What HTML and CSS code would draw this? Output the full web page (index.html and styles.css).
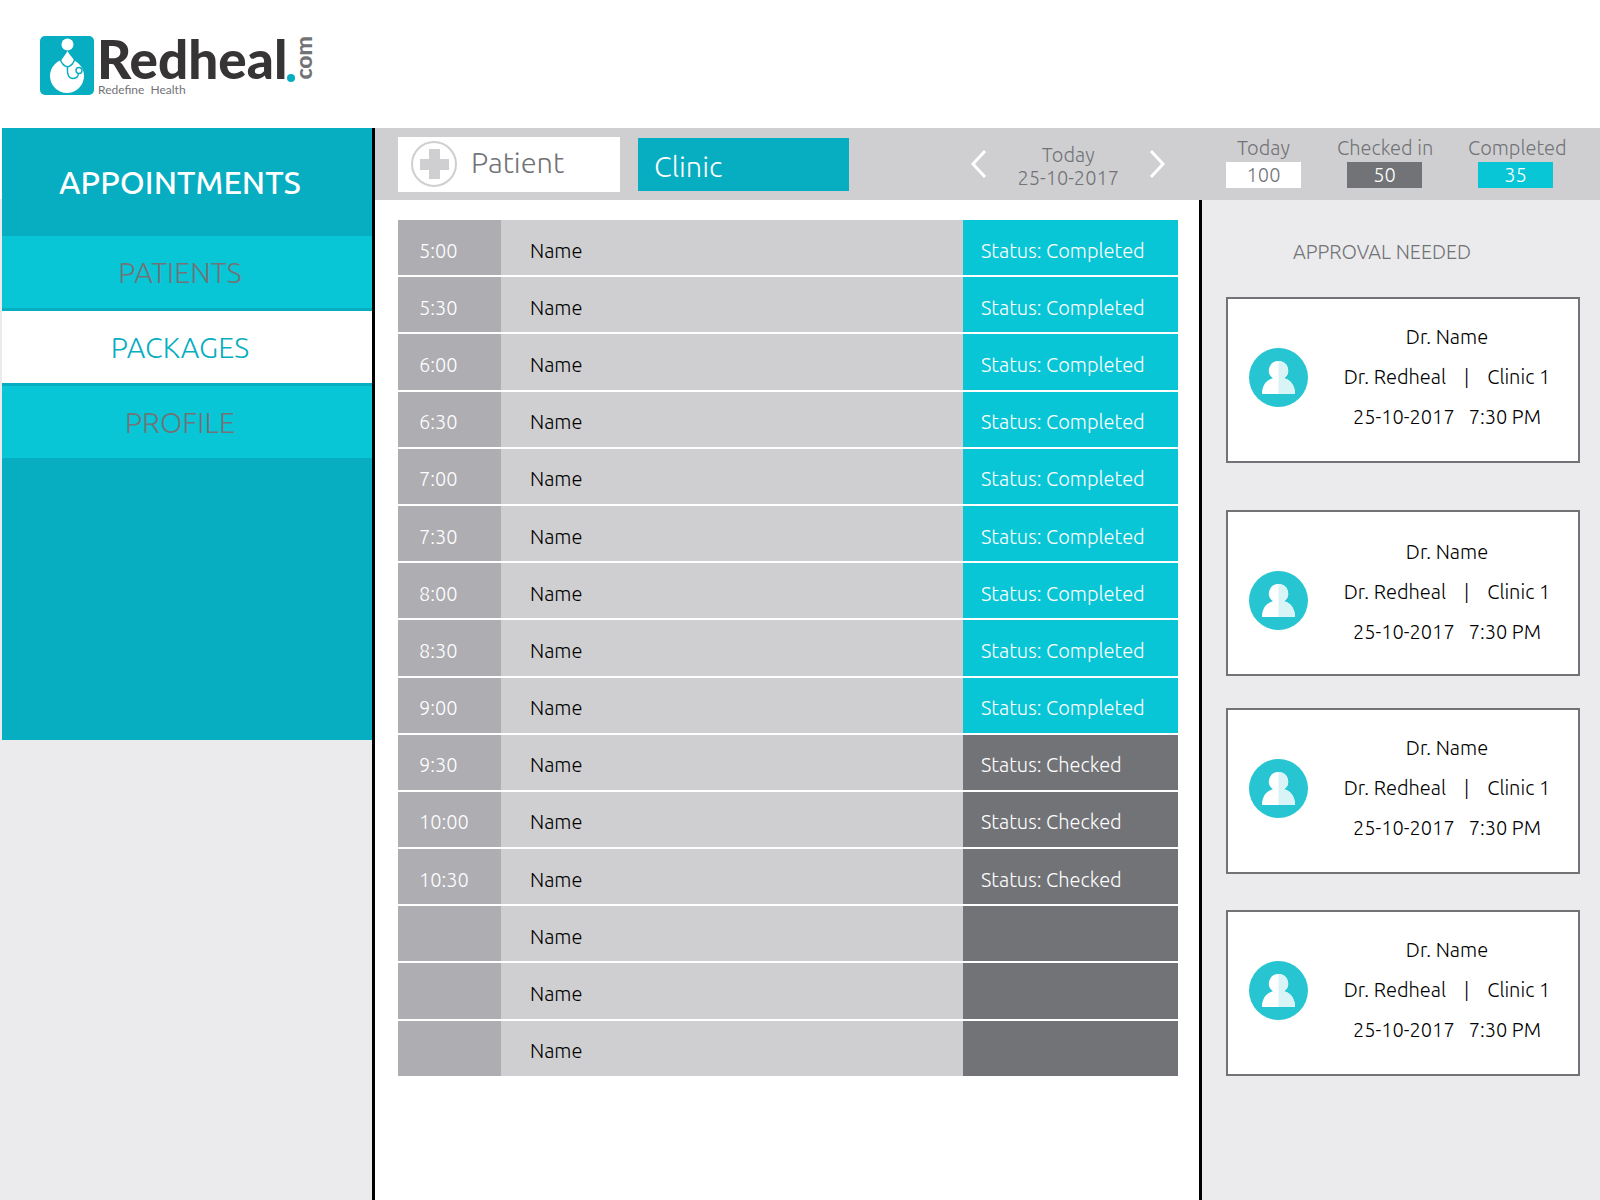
FILE: index.html
```html
<!DOCTYPE html>
<html lang="en">
<head>
<meta charset="utf-8">
<title>Redheal.com – Appointments</title>
<meta name="viewport" content="width=device-width, initial-scale=1">
<link rel="stylesheet" href="styles.css">
</head>
<body>
<svg class="sprite" width="0" height="0" aria-hidden="true">
  <symbol id="avatar" viewBox="0 0 59 59">
    <circle cx="29.5" cy="29.5" r="29.5" fill="#27c5d1"/>
    <path d="M29.500 13a9.500 9.500 0 0 0-5.500 17.300C17 32 13 38 13 46h33c0-8-4-14-11-15.700A9.500 9.500 0 0 0 29.500 13z" fill="#fff"/>
    <path d="M29.500 13a9.500 9.500 0 0 1 5.500 17.300C42 32 46 38 46 46H29.500z" fill="#d9f4f6"/>
  </symbol>
</svg>

<header class="site-header">
  <a class="logo" href="#" aria-label="Redheal.com">
    <svg class="logo-mark" viewBox="0 0 54 59" aria-hidden="true">
      <rect width="54" height="59" rx="5" fill="#07adc0"/>
      <circle cx="27" cy="40" r="17" fill="#fff"/>
      <circle cx="27.500" cy="8.500" r="6" fill="#fff"/>
      <path d="M27.500 15C25 19.500 23 21.500 21 24.500c1.500 4 4 5.500 6.500 6 3-.5 5.500-2 7-6-2-3-4.500-5-7-9.500z" fill="#fff"/>
      <path d="M20.500 23.500c1 4.500 4 6.500 7 7.500 3-1 6-3 7-7.500M27.500 31c-.5 7.500 1 11.500 5.500 11.500 4 0 6-2.500 5-6" fill="none" stroke="#07adc0" stroke-width="1.400"/>
      <circle cx="39" cy="34.500" r="3" fill="#fff" stroke="#07adc0" stroke-width="1.400"/>
    </svg>
    <span class="logo-words">
      <span class="logo-name">Redheal</span>
      <span class="logo-tag">Redefine&nbsp; Health</span>
    </span>
    <span class="logo-dot"></span>
    <span class="logo-com">com</span>
  </a>
</header>

<div class="layout">
  <aside class="sidebar">
    <nav class="menu">
      <h1 class="menu-title">APPOINTMENTS</h1>
      <a class="menu-item" href="#">PATIENTS</a>
      <a class="menu-item is-active" href="#">PACKAGES</a>
      <a class="menu-item" href="#">PROFILE</a>
    </nav>
  </aside>

  <div class="content">
    <div class="toolbar">
      <div class="toolbar-main">
        <button class="btn btn-patient" type="button">
          <svg class="plus" viewBox="0 0 46 46" aria-hidden="true">
            <circle cx="23" cy="23" r="22" fill="none" stroke="#cfcfd1" stroke-width="2"/>
            <path d="M18 8h11v10h9v11h-9v9H18v-9H9V18h9z" fill="#cfcfd1"/>
          </svg>
          <span class="btn-label">Patient</span>
        </button>
        <button class="btn btn-clinic" type="button">Clinic</button>
        <div class="date-nav">
          <button class="arrow" type="button" aria-label="Previous day">
            <svg viewBox="0 0 16 28" aria-hidden="true"><path d="M14 1L2 14l12 13" fill="none" stroke="#fff" stroke-width="3"/></svg>
          </button>
          <div class="date">Today<br>25-10-2017</div>
          <button class="arrow" type="button" aria-label="Next day">
            <svg viewBox="0 0 16 28" aria-hidden="true"><path d="M2 1l12 13L2 27" fill="none" stroke="#fff" stroke-width="3"/></svg>
          </button>
        </div>
      </div>
      <dl class="stats">
        <div class="stat stat-today"><dt>Today</dt><dd>100</dd></div>
        <div class="stat stat-checked"><dt>Checked in</dt><dd>50</dd></div>
        <div class="stat stat-completed"><dt>Completed</dt><dd>35</dd></div>
      </dl>
    </div>

    <div class="columns">
      <main class="schedule">
        <table class="slots">
          <tbody>
            <tr><td class="time">5:00</td><td class="name">Name</td><td class="status completed">Status: Completed</td></tr>
            <tr><td class="time">5:30</td><td class="name">Name</td><td class="status completed">Status: Completed</td></tr>
            <tr><td class="time">6:00</td><td class="name">Name</td><td class="status completed">Status: Completed</td></tr>
            <tr><td class="time">6:30</td><td class="name">Name</td><td class="status completed">Status: Completed</td></tr>
            <tr><td class="time">7:00</td><td class="name">Name</td><td class="status completed">Status: Completed</td></tr>
            <tr><td class="time">7:30</td><td class="name">Name</td><td class="status completed">Status: Completed</td></tr>
            <tr><td class="time">8:00</td><td class="name">Name</td><td class="status completed">Status: Completed</td></tr>
            <tr><td class="time">8:30</td><td class="name">Name</td><td class="status completed">Status: Completed</td></tr>
            <tr><td class="time">9:00</td><td class="name">Name</td><td class="status completed">Status: Completed</td></tr>
            <tr><td class="time">9:30</td><td class="name">Name</td><td class="status checked">Status: Checked</td></tr>
            <tr><td class="time">10:00</td><td class="name">Name</td><td class="status checked">Status: Checked</td></tr>
            <tr><td class="time">10:30</td><td class="name">Name</td><td class="status checked">Status: Checked</td></tr>
            <tr><td class="time"></td><td class="name">Name</td><td class="status checked"></td></tr>
            <tr><td class="time"></td><td class="name">Name</td><td class="status checked"></td></tr>
            <tr><td class="time"></td><td class="name">Name</td><td class="status checked"></td></tr>
          </tbody>
        </table>
      </main>

      <aside class="approvals">
        <h2 class="approvals-title">APPROVAL NEEDED</h2>
        <article class="card card-first">
          <svg class="avatar" aria-hidden="true"><use href="#avatar"/></svg>
          <div class="card-text">
            <p>Dr. Name</p>
            <p class="place"><span>Dr. Redheal</span><span>|</span><span>Clinic 1</span></p>
            <p class="when"><span>25-10-2017</span><span>7:30 PM</span></p>
          </div>
        </article>
        <article class="card card-low">
          <svg class="avatar" aria-hidden="true"><use href="#avatar"/></svg>
          <div class="card-text">
            <p>Dr. Name</p>
            <p class="place"><span>Dr. Redheal</span><span>|</span><span>Clinic 1</span></p>
            <p class="when"><span>25-10-2017</span><span>7:30 PM</span></p>
          </div>
        </article>
        <article class="card">
          <svg class="avatar" aria-hidden="true"><use href="#avatar"/></svg>
          <div class="card-text">
            <p>Dr. Name</p>
            <p class="place"><span>Dr. Redheal</span><span>|</span><span>Clinic 1</span></p>
            <p class="when"><span>25-10-2017</span><span>7:30 PM</span></p>
          </div>
        </article>
        <article class="card">
          <svg class="avatar" aria-hidden="true"><use href="#avatar"/></svg>
          <div class="card-text">
            <p>Dr. Name</p>
            <p class="place"><span>Dr. Redheal</span><span>|</span><span>Clinic 1</span></p>
            <p class="when"><span>25-10-2017</span><span>7:30 PM</span></p>
          </div>
        </article>
      </aside>
    </div>
  </div>
</div>
</body>
</html>
```
FILE: styles.css
```css
:root {
  --teal: #07adc0;
  --cyan: #09c6d6;
  --slate: #727377;
  --silver: #cfcfd1;
  --mist: #ebebed;
}

* { box-sizing: border-box; }

body {
  margin: 0;
  min-height: 100vh;
  display: flex;
  flex-direction: column;
  background: #fff;
  color: #000;
  font: 300 20px/24px "Ubuntu", Roboto, "Noto Sans", sans-serif;
}

h1, h2, p, dl, dd { margin: 0; font-weight: 300; }
a { color: inherit; text-decoration: none; }
button { border: 0; padding: 0; background: none; font: inherit; color: inherit; cursor: pointer; }
svg { display: block; }
.sprite { position: absolute; }

/* Header */
.site-header { height: 128px; padding: 36px 40px 0; }
.logo { display: inline-flex; align-items: flex-start; }
.logo-mark { width: 54px; height: 59px; }
.logo-words { display: flex; flex-direction: column; margin-left: 3px; }
.logo-name {
  color: #373435;
  font: 900 53px/46px Lato, sans-serif;
}
.logo-tag {
  padding-left: 1px;
  color: var(--slate);
  font: 400 12px/16px Lato, sans-serif;
}
.logo-dot { width: 8px; height: 8px; margin-top: 38px; border-radius: 50%; background: var(--teal); }
.logo-com {
  writing-mode: vertical-rl;
  transform: rotate(180deg);
  color: var(--slate);
  font: 900 23px/16px Lato, sans-serif;
}

/* Shell */
.layout { flex: 1; display: flex; background: var(--mist); }
.sidebar {
  flex: 0 0 375px;
  padding-left: 2px;
  border-right: 3px solid #000;
  background: linear-gradient(#fff 71px, var(--mist) 71px);
}
.content { flex: 1; display: flex; flex-direction: column; }

/* Side menu */
.menu { min-height: 612px; background: var(--teal); }
.menu-title, .menu-item { padding-right: 14px; text-align: center; }
.menu-title { color: #fff; font-size: 32px; font-weight: 500; line-height: 108px; }
.menu-item {
  display: block;
  margin-bottom: 3px;
  background: var(--cyan);
  color: var(--slate);
  font-size: 29px;
  line-height: 72px;
}
.menu-item.is-active { background: #fff; color: var(--teal); }

/* Toolbar */
.toolbar { display: flex; height: 72px; background: var(--silver); color: var(--slate); }
.toolbar-main { flex: 1; display: flex; align-items: center; padding: 0 61px 0 23px; }
.btn { display: flex; align-items: center; font-size: 29px; }
.btn-patient { width: 222px; height: 55px; padding-left: 13px; gap: 14px; background: #fff; }
.btn-label { padding-bottom: 4px; }
.btn-clinic { width: 211px; height: 53px; margin-left: 18px; padding: 4px 0 0 16px; background: var(--teal); color: #fff; }
.plus { width: 46px; height: 46px; }
.date-nav { display: flex; align-items: center; gap: 30px; margin-left: auto; }
.date { padding-top: 4px; line-height: 23px; text-align: center; }
.arrow svg { width: 16px; height: 28px; }

.stats { flex: 0 0 374px; display: flex; gap: 36px; padding-top: 8px; }
.stat { width: 95px; text-align: center; white-space: nowrap; }
.stat-today { width: 75px; }
.stat dt { line-height: 24px; }
.stat dd { width: 75px; margin: 2px auto 0; line-height: 26px; color: #fff; }
.stat-today dd { background: #fff; color: var(--slate); }
.stat-checked dd { background: var(--slate); }
.stat-completed dd { background: var(--cyan); }

/* Schedule */
.columns { flex: 1; display: flex; }
.schedule { flex: 1; padding: 18px 21px 0 23px; background: #fff; }
.slots { width: 100%; height: 860px; border-spacing: 0 2px; table-layout: fixed; }
.slots td { padding: 6px 0 0; background: var(--silver); }
.slots .time { width: 103px; padding-left: 21px; background: #aeadb2; color: #fff; }
.slots .name { padding-left: 29px; }
.slots .status { width: 215px; padding-left: 18px; color: #fff; }
.slots .completed { background: var(--cyan); }
.slots .checked { background: var(--slate); }

/* Approvals */
.approvals { flex: 0 0 401px; padding: 40px 20px 40px 24px; border-left: 3px solid #000; }
.approvals-title { margin-bottom: 33px; padding-right: 42px; color: var(--slate); font-size: 20px; line-height: 24px; text-align: center; }
.card {
  display: flex;
  gap: 8px;
  min-height: 166px;
  margin-bottom: 36px;
  padding-left: 21px;
  border: 2px solid var(--slate);
  background: #fff;
}
.card-first { margin-bottom: 47px; }
.card-low { margin-bottom: 32px; }
.avatar { flex: none; width: 59px; height: 59px; margin-top: 49px; }
.card-low .avatar { margin-top: 59px; }
.card-text { flex: 1; padding-top: 18px; line-height: 40px; }
.card-low .card-text { padding-top: 20px; }
.card-text p { display: flex; justify-content: center; }
.card-text .place { gap: 18px; }
.card-text .when { gap: 14px; }
```
